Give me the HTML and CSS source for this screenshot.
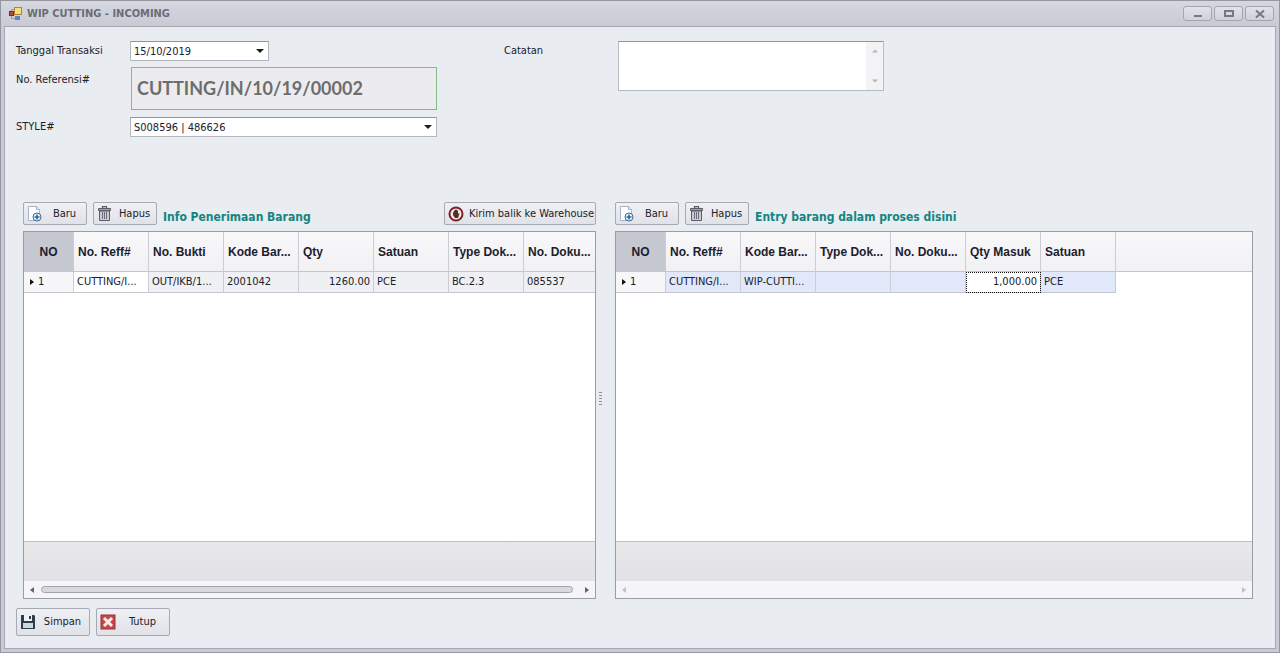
FILE: index.html
```
<!DOCTYPE html>
<html lang="id">
<head>
<meta charset="utf-8">
<title>WIP CUTTING - INCOMING</title>
<link rel="stylesheet" href="styles.css">
</head>
<body>
<svg class="defs" aria-hidden="true">
  <symbol id="new" viewBox="0 0 16 16">
    <path d="M1.500 .5h8l3 3v11h-11z" fill="#fdfeff" stroke="#a5b4c8"/>
    <path d="M9.500 .5v3h3" fill="#dfe7f1" stroke="#a5b4c8"/>
    <circle cx="10" cy="11" r="4" fill="#e9f3fb" stroke="#42688f"/>
    <path d="M10 8.500v5M7.500 11h5" stroke="#2a6799" stroke-width="1.500"/>
  </symbol>
  <symbol id="trash" viewBox="0 0 16 16">
    <path d="M5.500 2.500V.5h4v2" fill="none" stroke="#5a5c69" stroke-width="1.300"/>
    <path d="M1.500 2.500h12v2h-12z" fill="#a3a5b0" stroke="#5a5c69"/>
    <path d="M2.500 5h10v9.500h-10z" fill="#c9cbd3" stroke="#5a5c69"/>
    <path d="M5.500 6v7M7.500 6v7M9.500 6v7" stroke="#6b6e7b"/>
  </symbol>
  <symbol id="down" viewBox="0 0 8 4"><path d="M0 0h8L4 4z" fill="currentColor"/></symbol>
  <symbol id="left" viewBox="0 0 4 6"><path d="M4 0v6L0 3z" fill="currentColor"/></symbol>
  <symbol id="right" viewBox="0 0 4 6"><path d="M0 0v6l4-3z" fill="currentColor"/></symbol>
</svg>
<div class="window">
  <header class="titlebar">
    <svg class="app-icon" viewBox="0 0 14 14" aria-hidden="true">
      <path d="M2.500 4V2.500H6M2.500 9v2.500H6" fill="none" stroke="#9a9ba5"/>
      <rect x="0.500" y="4.500" width="4" height="4" fill="#b54b43" stroke="#7d2723"/>
      <rect x="5.500" y="0.500" width="7" height="7" fill="#f6df79" stroke="#a88a36"/>
      <rect x="6" y="9" width="5" height="4" fill="#5f83bd"/>
    </svg>
    <h1 class="title">WIP CUTTING - INCOMING</h1>
    <div class="controls">
      <button class="control" type="button" aria-label="Minimize"><svg viewBox="0 0 12 10"><path d="M2 7h8" stroke="#77797f" stroke-width="2"/></svg></button>
      <button class="control" type="button" aria-label="Maximize"><svg viewBox="0 0 12 10"><path d="M2 2h8v5H2z" fill="none" stroke="#77797f" stroke-width="2"/></svg></button>
      <button class="control" type="button" aria-label="Close"><svg viewBox="0 0 12 10"><path d="M2 1.500l8 7M10 1.500l-8 7" stroke="#77797f" stroke-width="2"/></svg></button>
    </div>
  </header>

  <main class="content">
    <form class="form">
      <div class="fields">
        <label class="label" for="date">Tanggal Transaksi</label>
        <div class="combo combo-date">
          <input class="combo-input" id="date" type="text" value="15/10/2019">
          <button class="combo-button" type="button" aria-label="Pilih tanggal"><svg class="arrow"><use href="#down"/></svg></button>
        </div>
        <label class="label label-tall" for="ref">No. Referensi#</label>
        <input class="reference" id="ref" type="text" value="CUTTING/IN/10/19/00002" readonly>
        <label class="label" for="style">STYLE#</label>
        <div class="combo">
          <select class="combo-input" id="style"><option>S008596 | 486626</option></select>
          <svg class="arrow select-arrow" aria-hidden="true"><use href="#down"/></svg>
        </div>
      </div>
      <div class="notes">
        <label class="label" for="notes">Catatan</label>
        <div class="memo">
          <textarea class="memo-text" id="notes"></textarea>
          <div class="memo-scroll" aria-hidden="true">
            <svg class="memo-arrow memo-up"><use href="#down"/></svg>
            <svg class="memo-arrow"><use href="#down"/></svg>
          </div>
        </div>
      </div>
    </form>

    <div class="panels">
      <section class="panel">
        <div class="toolbar">
          <button class="button" type="button"><svg class="icon"><use href="#new"/></svg><span class="button-text">Baru</span></button>
          <button class="button" type="button"><svg class="icon"><use href="#trash"/></svg><span class="button-text">Hapus</span></button>
          <h2 class="heading">Info Penerimaan Barang</h2>
          <button class="button button-return" type="button">
            <svg class="icon" viewBox="0 0 16 16"><circle cx="8" cy="8" r="6.500" fill="#f3e8e5" stroke="#7c2024" stroke-width="2"/><path d="M5 7l1-2 1-1 1-.5 1 .5 1 1v3l1-1 .5.5L10 12H7L5 9z" fill="#49322d"/></svg>
            <span class="button-text">Kirim balik ke Warehouse</span>
          </button>
        </div>
        <div class="grid">
          <table class="table">
            <colgroup><col class="col-no"><col class="col"><col class="col"><col class="col"><col class="col"><col class="col"><col class="col"><col></colgroup>
            <thead><tr><th class="no">NO</th><th>No. Reff#</th><th>No. Bukti</th><th>Kode Bar...</th><th>Qty</th><th>Satuan</th><th>Type Dok...</th><th>No. Doku...</th></tr></thead>
            <tbody><tr class="row"><td class="indicator"><svg class="marker"><use href="#right"/></svg>1</td><td class="active">CUTTING/I...</td><td>OUT/IKB/1...</td><td>2001042</td><td class="number">1260.00</td><td>PCE</td><td>BC.2.3</td><td>085537</td></tr></tbody>
          </table>
          <div class="footer"></div>
          <div class="scrollbar"><svg class="side"><use href="#left"/></svg><div class="track"><div class="thumb"></div></div><svg class="side"><use href="#right"/></svg></div>
        </div>
      </section>

      <div class="splitter" aria-hidden="true"><span class="grip"></span></div>

      <section class="panel">
        <div class="toolbar">
          <button class="button" type="button"><svg class="icon"><use href="#new"/></svg><span class="button-text">Baru</span></button>
          <button class="button" type="button"><svg class="icon"><use href="#trash"/></svg><span class="button-text">Hapus</span></button>
          <h2 class="heading">Entry barang dalam proses disini</h2>
        </div>
        <div class="grid">
          <table class="table">
            <colgroup><col class="col-no"><col class="col"><col class="col"><col class="col"><col class="col"><col class="col"><col class="col"><col></colgroup>
            <thead><tr><th class="no">NO</th><th>No. Reff#</th><th>Kode Bar...</th><th>Type Dok...</th><th>No. Doku...</th><th>Qty Masuk</th><th>Satuan</th><th class="rest"></th></tr></thead>
            <tbody><tr class="row row-selected"><td class="indicator"><svg class="marker"><use href="#right"/></svg>1</td><td>CUTTING/I...</td><td>WIP-CUTTI...</td><td></td><td></td><td class="number focused">1,000.00</td><td>PCE</td><td class="rest"></td></tr></tbody>
          </table>
          <div class="footer"></div>
          <div class="scrollbar scrollbar-off"><svg class="side"><use href="#left"/></svg><div class="track"></div><svg class="side"><use href="#right"/></svg></div>
        </div>
      </section>
    </div>

    <div class="actions">
      <button class="button button-large" type="button">
        <svg class="icon" viewBox="0 0 16 16"><path d="M1 1h13l1 1v13H1z" fill="#303b4b"/><path d="M4 1h8v6H4z" fill="#eef2f5"/><path d="M9 2h2v3H9z" fill="#303b4b"/><path d="M3 9h10v5H3z" fill="#c9d7df"/></svg>
        <span class="button-text">Simpan</span>
      </button>
      <button class="button button-large" type="button">
        <svg class="icon" viewBox="0 0 16 16"><rect x="1" y="1" width="14" height="14" fill="#c5474a" stroke="#963237"/><path d="M4 4l8 8M12 4l-8 8" stroke="#fbeceb" stroke-width="3"/><path d="M8 6l2 2-2 2-2-2z" fill="#fbeceb"/></svg>
        <span class="button-text">Tutup</span>
      </button>
    </div>
  </main>
</div>
</body>
</html>
```
FILE: styles.css
```
* { box-sizing: border-box; }

body {
  margin: 0;
  font: 11px/14px "DejaVu Sans Condensed", "DejaVu Sans", sans-serif;
  color: #20202c;
}

button, input, select, textarea {
  margin: 0;
  padding: 0;
  font: inherit;
  color: inherit;
}

.defs { display: none; }

.window {
  display: flex;
  flex-direction: column;
  min-height: 100vh;
  padding: 0 3px 3px;
  border: 1px solid #9596a2;
  background: #c8cad5;
}

.titlebar {
  display: flex;
  align-items: center;
  height: 25px;
  margin: 0 -3px;
  padding: 0 5px 0 8px;
  background: linear-gradient(#d6d7df, #c8cad4);
}

.app-icon { width: 14px; height: 14px; margin-right: 4px; }

.title {
  flex: 1;
  margin: 0;
  font-size: 11px;
  color: #6b6c76;
}

.controls { display: flex; gap: 2px; }

.control {
  display: flex;
  align-items: center;
  justify-content: center;
  width: 29px;
  height: 15px;
  border: 1px solid #a3a5b0;
  border-radius: 3px;
  background: linear-gradient(#e2e3e8, #cfd1d9);
}

.control svg { width: 12px; height: 10px; }

.content {
  flex: 1;
  display: flex;
  flex-direction: column;
  padding: 14px 11px 12px;
  border: 1px solid #a6a8b4;
  background: #e9ecf0;
}

.form { display: flex; height: 161px; }

.fields {
  display: grid;
  grid-template-columns: 114px 307px;
  grid-template-rows: 20px 44px 20px;
  row-gap: 6px;
  width: 488px;
}

.label { padding-top: 3px; }
.label-tall { padding-top: 6px; }

.combo {
  position: relative;
  display: flex;
  height: 20px;
  border: 1px solid #b4b6be;
  border-top-color: #92949c;
  background: #fff;
}

.combo-date { width: 139px; }

.combo-input {
  flex: 1;
  min-width: 0;
  padding: 1px 3px 0;
  border: 0;
  background: transparent;
  appearance: none;
}

.combo-button {
  display: flex;
  align-items: center;
  justify-content: center;
  width: 16px;
  border: 0;
  background: transparent;
}

.arrow { width: 8px; height: 4px; color: #1c1c1c; }

.select-arrow {
  position: absolute;
  top: 7px;
  right: 4px;
  pointer-events: none;
}

.reference {
  width: 306px;
  height: 43px;
  margin-left: 1px;
  padding: 0 5px 2px;
  border: 1px solid #86b988;
  background: #ecebee;
  font: bold 18px/24px Lato, sans-serif;
  color: #6d6d6d;
}

.notes { display: flex; }
.notes .label { width: 114px; }

.memo {
  display: flex;
  width: 266px;
  height: 50px;
  border: 1px solid #b9bbc3;
  border-top-color: #92949c;
  background: #fff;
}

.memo-text {
  flex: 1;
  min-width: 0;
  border: 0;
  resize: none;
  background: transparent;
}

.memo-scroll {
  display: flex;
  flex-direction: column;
  justify-content: space-between;
  align-items: center;
  width: 17px;
  padding: 7px 0;
  background: #f3f3f5;
}

.memo-arrow { width: 6px; height: 4px; color: #b5b6bc; }
.memo-up { transform: rotate(180deg); }

.panels {
  flex: 1;
  display: grid;
  grid-template-columns: 573fr 19px 638fr;
  margin: 0 11px 0 7px;
}

.panel {
  display: flex;
  flex-direction: column;
  min-width: 0;
}

.toolbar {
  display: flex;
  gap: 6px;
  margin-bottom: 6px;
}

.button {
  display: flex;
  align-items: center;
  gap: 5px;
  height: 23px;
  padding: 0 5px 0 3px;
  border: 1px solid #a7a9b5;
  border-radius: 2px;
  background: linear-gradient(#eff0f3, #e0e2e8);
  white-space: nowrap;
}

.icon { width: 16px; height: 16px; flex: none; }
.button-text { flex: 1; text-align: center; }
.toolbar .button { width: 64px; }
.toolbar .button-return { width: 152px; margin-left: auto; padding-right: 2px; }

.heading {
  margin: 7px 0 0;
  font-size: 12px;
  line-height: 16px;
  white-space: nowrap;
  color: #128582;
}

.grid {
  flex: 1;
  display: flex;
  flex-direction: column;
  border: 1px solid #9a9ca6;
  background: #fff;
}

.table {
  width: 100%;
  table-layout: fixed;
  border-collapse: separate;
  border-spacing: 0;
}

.col-no { width: 50px; }
.col { width: 75px; }

th, td {
  padding: 0 3px;
  border-right: 1px solid #cbccd4;
  border-bottom: 1px solid #c4c5cd;
  overflow: hidden;
  text-align: left;
  white-space: nowrap;
}

th:last-child, td:last-child { border-right: 0; }

th {
  height: 40px;
  padding-left: 4px;
  padding-right: 0;
  background: linear-gradient(#f8f8fa, #f1f1f4);
  font: bold 12px/16px "Liberation Sans", Arial, sans-serif;
}

.no {
  padding: 0;
  background: #c6c8d1;
  text-align: center;
}

td { height: 21px; }
.row td { background: #eff0f3; }
.row .active { background: #fff; }
.row-selected td { background: #e1e8fa; }
.row .indicator { padding-left: 6px; background: #f7f7f9; }
.marker { width: 4px; height: 6px; margin-right: 4px; color: #111; }
.number { text-align: right; }
.row .focused { background: #fff; outline: 1px dotted #111; outline-offset: -1px; }
.row .rest { border: 0; background: #fff; }

.footer {
  height: 40px;
  margin-top: auto;
  border-top: 1px solid #c0c1c8;
  background: linear-gradient(#e8e8eb, #e2e2e6);
}

.scrollbar {
  display: flex;
  align-items: center;
  gap: 7px;
  height: 17px;
  padding: 0 6px;
  background: #f5f5f9;
  color: #62636c;
}

.scrollbar-off { color: #c0c1ca; }
.side { width: 4px; height: 6px; }
.track { flex: 1; padding-right: 5px; }

.thumb {
  height: 7px;
  border: 1px solid #a2a3ab;
  border-radius: 4px;
  background: #d8d9df;
}

.splitter {
  display: flex;
  align-items: center;
  padding: 0 0 4px 3px;
}

.grip {
  width: 3px;
  height: 14px;
  background: repeating-linear-gradient(#8d8f99 0 1px, transparent 1px 3px);
}

.actions {
  display: flex;
  gap: 6px;
  margin-top: 9px;
}

.button-large { width: 74px; height: 28px; }
```
